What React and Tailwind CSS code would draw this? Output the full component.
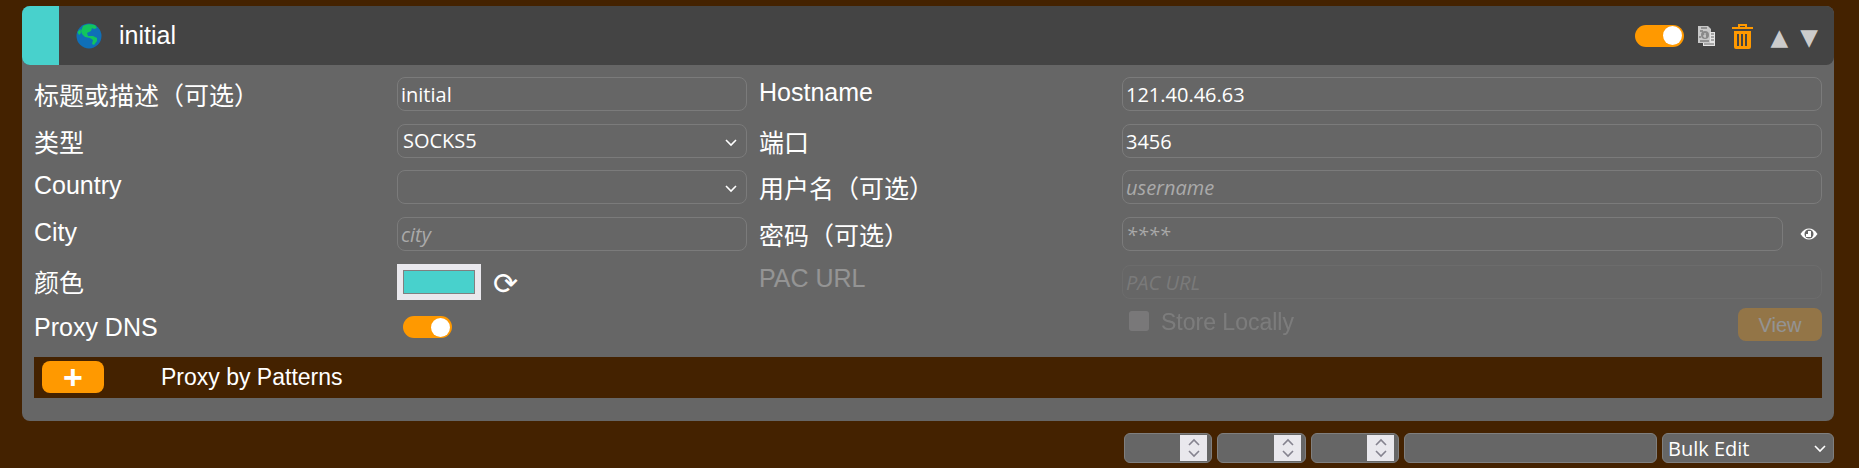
import React from 'react';

const labelFont = "font-['Liberation_Sans','Noto_Sans_CJK_SC',sans-serif]";
const inputBase = "h-[34px] w-full rounded-lg border border-[#7b7b7b] bg-transparent px-[3px] pt-[1px] font-['Open_Sans',sans-serif] text-[20px] text-white outline-none placeholder:italic placeholder:text-[#aaaaaa]";

function Toggle() {
    return (
        <div className="flex h-[22px] w-[49px] items-center justify-end rounded-full bg-[#ff9900] pr-[2px]">
            <div className="h-[19px] w-[19px] rounded-full bg-white"></div>
        </div>
    );
}

function Chevron({ className }) {
    return (
        <svg className={className} width="14" height="9" viewBox="0 0 14 9" fill="none" stroke="currentColor" strokeWidth="1.6">
            <path d="M2 2l5 5 5-5" />
        </svg>
    );
}

function Row({ label, pad = 'pt-[1px]', width, children }) {
    return (
        <div className="flex h-[46.67px] items-start">
            <label className={`${width} ${pad} text-[25px] leading-[28px] text-white`}>{label}</label>
            <div className="min-w-0 flex-1">{children}</div>
        </div>
    );
}

function Select({ value }) {
    return (
        <div className="relative">
            <select defaultValue={value} className={`${inputBase} appearance-none pl-[5px]`}>
                <option value={value}>{value}</option>
            </select>
            <Chevron className="absolute right-[9px] top-[14px] text-white" />
        </div>
    );
}

function Spinner({ width }) {
    return (
        <div className={`${width} flex h-[30px] justify-end rounded-md border border-[#7f7f7f] bg-[#666] py-[1px] pr-[4px]`}>
            <div className="flex w-[27px] flex-col items-center justify-center gap-[2px] bg-[#e9e8ed] text-[#85838f]">
                <Chevron className="rotate-180" />
                <Chevron />
            </div>
        </div>
    );
}

function Globe() {
    return (
        <svg width="26" height="26" viewBox="0 0 26 26">
            <circle cx="13" cy="13" r="12.5" fill="#0f6fb8" />
            <path d="M7 3c3-2 8-2.500 12-1l2 3-3 1-2-1-1 3-4 2 1 3 5 0 4 2 0 3-3 4-2-1 1-4-3-2-5-1-3-3-1-3z" fill="#12c45e" />
            <path d="M1.500 9l3-3 .5 4-2 2z" fill="#12c45e" />
        </svg>
    );
}

function CopyIcon() {
    return (
        <svg width="17" height="20" viewBox="0 0 17 20">
            <path d="M0 0h10l3 3v14H0z" fill="#c8c8c8" />
            <path d="M3 2h6M2 5h3M2 15h9M1 11h2" stroke="#5a5a5a" strokeWidth="1" />
            <circle cx="7" cy="9" r="4" fill="#8a8a8a" />
            <path d="M5 10h3M7 7v5" stroke="#d8d8d8" strokeWidth="1" />
            <path d="M5 20v-3h7V6h5v14z" fill="#e4e4e4" />
            <path d="M13 8h3M13 11h3M13 14h3M6 18h10" stroke="#666" strokeWidth="1" />
        </svg>
    );
}

function TrashIcon() {
    return (
        <svg width="21" height="26" viewBox="0 0 21 26" fill="#ff9900">
            <path fillRule="evenodd" d="M6 4V1h9v3h6v2H0V4zm2-1v1h5V3z" />
            <path fillRule="evenodd" d="M2 8h17v16a2 2 0 0 1-2 2H4a2 2 0 0 1-2-2zm3 3v12h2V11zm4 0v12h2V11zm4 0v12h2V11z" />
        </svg>
    );
}

function EyeIcon() {
    return (
        <svg width="18" height="12" viewBox="0 0 18 12">
            <path d="M0.500 6C3 2 6 0.500 9 0.500s6 1.500 8.500 5.500c-2.500 4-5.500 5.500-8.500 5.500s-6-1.500-8.500-5.500z" fill="white" />
            <circle cx="9" cy="6" r="4.500" fill="#666" />
            <path d="M8 3h3v6H6V6h2z" fill="white" />
        </svg>
    );
}

export default function App() {
    const cjk = 'pt-[5px]';

    return (
        <div className={`h-[468px] overflow-hidden bg-[#442200] pl-[22px] pr-[25px] pt-[6px] ${labelFont}`}>
            <div className="h-[415px] rounded-lg bg-[#666]">
                <div className="flex h-[59px] items-center rounded-lg bg-[#444]">
                    <div className="h-full w-[37px] rounded-l-lg bg-[#48d1cc]"></div>
                    <div className="ml-[17px]"><Globe /></div>
                    <div className="ml-[17px] mt-[1px] flex-1 text-[25px] text-white">initial</div>
                    <Toggle />
                    <div className="ml-[14px]"><CopyIcon /></div>
                    <div className="ml-[17px]"><TrashIcon /></div>
                    <div className="ml-[18px] mt-[3px] font-['DejaVu_Sans',sans-serif] text-[23px] leading-none text-[#cccccc]">▲</div>
                    <div className="ml-[12px] mr-[16px] mt-[3px] font-['DejaVu_Sans',sans-serif] text-[23px] leading-none text-[#cccccc]">▼</div>
                </div>

                <div className="flex gap-[12px] px-[12px] pt-[12px]">
                    <div className="w-[713px]">
                        <Row width="w-[363px]" pad={cjk} label="标题或描述（可选）">
                            <input className={inputBase} defaultValue="initial" />
                        </Row>
                        <Row width="w-[363px]" pad={cjk} label="类型"><Select value="SOCKS5" /></Row>
                        <Row width="w-[363px]" label="Country"><Select value="" /></Row>
                        <Row width="w-[363px]" label="City">
                            <input className={inputBase} placeholder="city" />
                        </Row>
                        <Row width="w-[363px]" pad={cjk} label="颜色">
                            <div className="flex items-center">
                                <div className="h-[36px] w-[84px] bg-[#e9e8ed] px-[6px] py-[6px]">
                                    <div className="h-full border border-[#808080] bg-[#48d1cc]"></div>
                                </div>
                                <span className="ml-[12px] mt-[4px] font-['DejaVu_Sans',sans-serif] text-[30px] leading-none text-white">⟳</span>
                            </div>
                        </Row>
                        <Row width="w-[363px]" pad="pt-[3px]" label="Proxy DNS">
                            <div className="pl-[6px] pt-[6px]"><Toggle /></div>
                        </Row>
                    </div>
                    <div className="w-[1063px]">
                        <Row width="w-[363px]" label="Hostname">
                            <input className={inputBase} defaultValue="121.40.46.63" />
                        </Row>
                        <Row width="w-[363px]" pad={cjk} label="端口">
                            <input className={inputBase} defaultValue="3456" />
                        </Row>
                        <Row width="w-[363px]" pad={cjk} label="用户名（可选）">
                            <input className={inputBase} placeholder="username" />
                        </Row>
                        <Row width="w-[363px]" pad={cjk} label="密码（可选）">
                            <div className="flex items-center">
                                <div className="w-[661px]"><input className={inputBase} placeholder="****" /></div>
                                <div className="ml-[17px]"><EyeIcon /></div>
                            </div>
                        </Row>
                        <div className="opacity-30">
                            <Row width="w-[363px]" pad="pt-0" label="PAC URL">
                                <input className={`${inputBase} mt-[1px]`} placeholder="PAC URL" disabled />
                            </Row>
                        </div>
                        <div className="flex h-[46.67px] items-start pl-[363px]">
                            <div className="flex flex-1 items-start pl-[7px] opacity-30">
                                <div className="mt-[1px] h-[20px] w-[20px] rounded-[3px] bg-[#e9e8ed] opacity-50"></div>
                                <span className="ml-[12px] -mt-[2px] text-[23px] leading-[28px] text-white opacity-50">Store Locally</span>
                                <button className="ml-auto -mt-[2px] h-[33px] w-[84px] rounded-lg bg-[#ff9900] text-[20px] text-white">View</button>
                            </div>
                        </div>
                    </div>
                </div>

                <div className="mx-[12px] flex h-[41px] items-center bg-[#442200] pl-[8px]">
                    <button className="flex h-[32px] w-[62px] items-center justify-center rounded-lg bg-[#ff9900] text-[34px] font-bold leading-none text-white">+</button>
                    <span className="ml-[57px] text-[23px] text-white">Proxy by Patterns</span>
                </div>
            </div>

            <div className="mt-[12px] flex justify-end gap-[5px]">
                <Spinner width="w-[88px]" />
                <Spinner width="w-[89px]" />
                <Spinner width="w-[88px]" />
                <div className="h-[30px] w-[253px] rounded-md border border-[#7f7f7f] bg-[#666]"></div>
                <div className="relative w-[172px]">
                    <select defaultValue="Bulk Edit" className="h-[30px] w-full appearance-none rounded-md border border-[#7f7f7f] bg-[#666] pl-[5px] font-['Open_Sans',sans-serif] text-[20px] text-white outline-none">
                        <option>Bulk Edit</option>
                    </select>
                    <Chevron className="absolute right-[7px] top-[11px] text-white" />
                </div>
            </div>
        </div>
    );
}
